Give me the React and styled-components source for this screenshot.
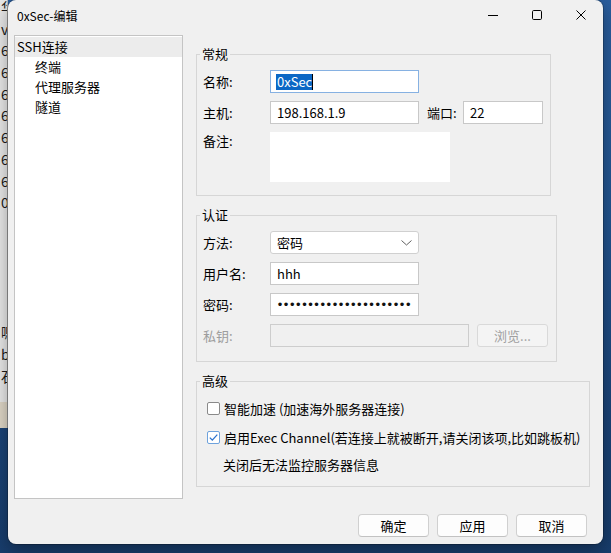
import React from "react";
import styled, { createGlobalStyle } from "styled-components";

const GlobalStyle = createGlobalStyle`
  html, body { margin: 0; padding: 0; width: 611px; height: 553px; overflow: hidden; background: #1c4478; }
  body { font-family: "Noto Sans CJK SC", "Noto Sans", sans-serif; font-size: 13px; color: #000; }
  * { box-sizing: border-box; }
`;

const Desktop = styled.div`
  display: flex;
  width: 611px;
  height: 553px;
  background: linear-gradient(180deg, #2a5e9e 0%, #22548f 40%, #1b4478 75%, #183d6c 100%);
`;

const LeftStrip = styled.div`
  width: 8px;
  flex: none;
  display: flex;
  flex-direction: column;
  overflow: hidden;
`;

const BackApp = styled.div`
  height: 405px;
  background: #e8e8e8;
  overflow: hidden;
  font-size: 14px;
  line-height: 21.7px;
  white-space: nowrap;
  margin-top: -3px;
  border-right: 1px solid #b9b9b9;
`;

const BackLine = styled.div`
  width: 7px;
  height: 21.7px;
  padding-left: 1px;
  overflow: hidden;
  color: #1a1a1a;
`;

const BackBar = styled.div`
  height: 26px;
  background: #ded6c6;
  border-right: 1px solid #b9b9b9;
`;

const WindowCol = styled.div`
  width: 595px;
  flex: none;
`;

const Window = styled.div`
  width: 595px;
  height: 544px;
  background: #f0f0f0;
  border-radius: 8px;
  overflow: hidden;
  box-shadow: 0 0 0 1px rgba(0, 0, 0, 0.22), 0 6px 18px rgba(0, 0, 0, 0.35);
  display: flex;
  flex-direction: column;
`;

const TitleBar = styled.div`
  height: 30px;
  flex: none;
  display: flex;
  align-items: center;
  justify-content: space-between;
  padding-left: 9px;
`;

const Title = styled.div`
  font-size: 12px;
  color: #000;
`;

const Controls = styled.div`
  display: flex;
  align-self: stretch;
`;

const CtrlBtn = styled.div`
  width: 44px;
  height: 30px;
  display: flex;
  align-items: center;
  justify-content: center;
`;

const Body = styled.div`
  height: 469px;
  flex: none;
  display: grid;
  grid-template-columns: 169px 1fr;
  column-gap: 13px;
  padding: 5px 0 0 6px;
`;

const Tree = styled.div`
  height: 464px;
  background: #fff;
  border: 1px solid #c4c4c4;
  padding-top: 1px;
`;

const TreeItem = styled.div`
  height: 20px;
  line-height: 20px;
  padding-left: ${(p) => (p.$child ? 20 : 2)}px;
  background: ${(p) => (p.$selected ? "#ececec" : "transparent")};
  white-space: nowrap;
`;

const Pane = styled.div`
  display: flex;
  flex-direction: column;
  align-items: flex-start;
`;

const Group = styled.fieldset`
  width: ${(p) => p.$w}px;
  margin: 10px 0 0;
  padding: 7px 6px ${(p) => p.$pb}px;
  border: 1px solid #d6d6d6;
  min-width: 0;
`;

const Legend = styled.legend`
  padding: 0 2px;
  margin-left: -3px;
  line-height: 18px;
  font-size: 13px;
`;

const Rows = styled.div`
  display: flex;
  flex-direction: column;
  gap: 8px;
`;

const Row = styled.div`
  display: flex;
  align-items: ${(p) => (p.$top ? "flex-start" : "center")};
  min-height: 23px;
`;

const Label = styled.div`
  width: ${(p) => p.$w || 67}px;
  flex: none;
  line-height: 18px;
  margin-left: ${(p) => p.$ml || 0}px;
  color: ${(p) => (p.$disabled ? "#9d9d9d" : "#000")};
  white-space: nowrap;
`;

const TextBox = styled.div`
  width: ${(p) => p.$w}px;
  height: 23px;
  flex: none;
  display: flex;
  align-items: center;
  padding: 0 6px;
  background: ${(p) => (p.$disabled ? "#f0f0f0" : "#fff")};
  border: 1px solid ${(p) => (p.$focused ? "#86b1e2" : p.$disabled ? "#cdcdcd" : "#c8c8c8")};
  overflow: hidden;
  white-space: nowrap;
`;

const Selected = styled.span`
  background: #0b67c5;
  color: #fff;
  line-height: 16px;
  margin-left: -1px;
  padding-left: 1px;
  border-right: 1px solid #000;
`;

const DotsClip = styled.div`
  flex: 1;
  min-width: 0;
  display: flex;
  justify-content: flex-end;
  overflow: hidden;
`;

const Dots = styled.span`
  flex: none;
  font-family: "Liberation Sans", Arial, sans-serif;
  font-size: 13px;
  letter-spacing: 1.55px;
  color: #111;
`;

const Select = styled.div`
  width: 149px;
  height: 23px;
  display: flex;
  align-items: center;
  justify-content: space-between;
  padding: 0 6px;
  background: #fff;
  border: 1px solid #d0d0d0;
  border-radius: 3px;
`;

const Memo = styled.div`
  width: 180px;
  height: 50px;
  background: #fff;
`;

const SmallButton = styled.div`
  width: 71px;
  height: 23px;
  margin-left: 8px;
  display: flex;
  align-items: center;
  justify-content: center;
  border: 1px solid #d9d9d9;
  border-radius: 3px;
  background: #f4f4f4;
  color: #a0a0a0;
`;

const CheckRow = styled.div`
  display: flex;
  align-items: center;
  height: 20px;
  gap: 4px;
  padding-left: ${(p) => (p.$hint ? 20 : 4)}px;
  margin-top: ${(p) => p.$mt || 0}px;
  white-space: nowrap;
`;

const Box = styled.div`
  width: 13px;
  height: 13px;
  flex: none;
  background: #fff;
  border: 1px solid ${(p) => (p.$checked ? "#6ea2dc" : "#8a8a8a")};
  border-radius: 2px;
  display: flex;
  align-items: center;
  justify-content: center;
`;

const Footer = styled.div`
  display: flex;
  justify-content: flex-end;
  gap: 8px;
  padding: 15px 16px 7px 0;
`;

const Button = styled.div`
  width: 71px;
  height: 23px;
  display: flex;
  align-items: center;
  justify-content: center;
  background: #fdfdfd;
  border: 1px solid #d0d0d0;
  border-bottom-color: #c2c2c2;
  border-radius: 4px;
`;

const backLines = ["华", "v", "6", "6", "6", "6", "6", "6", "6", "0", "", "", "", "", "", "嗯", "b", "石"];

function Check({ checked }) {
  return (
    <Box $checked={checked}>
      {checked && (
        <svg width="11" height="11" viewBox="0 0 11 11">
          <path d="M1.8 5.6 L4.3 8.1 L9.3 2.6" fill="none" stroke="#2b73cf" strokeWidth="1.3" />
        </svg>
      )}
    </Box>
  );
}

export default function App() {
  return (
    <>
      <GlobalStyle />
      <Desktop>
        <LeftStrip>
          <BackApp>
            {backLines.map((t, i) => (
              <BackLine key={i}>{t}</BackLine>
            ))}
          </BackApp>
          <BackBar />
        </LeftStrip>
        <WindowCol>
          <Window>
            <TitleBar>
              <Title>0xSec-编辑</Title>
              <Controls>
                <CtrlBtn>
                  <svg width="10" height="10" viewBox="0 0 10 10">
                    <path d="M0 5.5 H10" stroke="#000" strokeWidth="1" />
                  </svg>
                </CtrlBtn>
                <CtrlBtn>
                  <svg width="10" height="10" viewBox="0 0 10 10">
                    <rect x="0.5" y="0.5" width="9" height="9" rx="1.2" fill="none" stroke="#000" strokeWidth="1" />
                  </svg>
                </CtrlBtn>
                <CtrlBtn>
                  <svg width="10" height="10" viewBox="0 0 10 10">
                    <path d="M0.5 0.5 L9.5 9.5 M9.5 0.5 L0.5 9.5" stroke="#000" strokeWidth="1" />
                  </svg>
                </CtrlBtn>
              </Controls>
            </TitleBar>
            <Body>
              <Tree>
                <TreeItem $selected>SSH连接</TreeItem>
                <TreeItem $child>终端</TreeItem>
                <TreeItem $child>代理服务器</TreeItem>
                <TreeItem $child>隧道</TreeItem>
              </Tree>
              <Pane>
                <Group $w={355} $pb={13}>
                  <Legend>常规</Legend>
                  <Rows>
                    <Row>
                      <Label>名称:</Label>
                      <TextBox $w={149} $focused>
                        <Selected>0xSec</Selected>
                      </TextBox>
                    </Row>
                    <Row>
                      <Label>主机:</Label>
                      <TextBox $w={149}>198.168.1.9</TextBox>
                      <Label $w={36} $ml={8}>端口:</Label>
                      <TextBox $w={80}>22</TextBox>
                    </Row>
                    <Row $top>
                      <Label>备注:</Label>
                      <Memo />
                    </Row>
                  </Rows>
                </Group>
                <Group $w={361} $pb={14}>
                  <Legend>认证</Legend>
                  <Rows>
                    <Row>
                      <Label>方法:</Label>
                      <Select>
                        <span>密码</span>
                        <svg width="11" height="6" viewBox="0 0 11 6">
                          <path d="M0.5 0.5 L5.5 5 L10.5 0.5" fill="none" stroke="#606060" strokeWidth="1" />
                        </svg>
                      </Select>
                    </Row>
                    <Row>
                      <Label>用户名:</Label>
                      <TextBox $w={149}>hhh</TextBox>
                    </Row>
                    <Row>
                      <Label>密码:</Label>
                      <TextBox $w={149}>
                        <DotsClip>
                          <Dots>••••••••••••••••••••••••••</Dots>
                        </DotsClip>
                      </TextBox>
                    </Row>
                    <Row>
                      <Label $disabled>私钥:</Label>
                      <TextBox $w={199} $disabled />
                      <SmallButton>浏览...</SmallButton>
                    </Row>
                  </Rows>
                </Group>
                <Group $w={394} $pb={12}>
                  <Legend>高级</Legend>
                  <CheckRow $mt={1}>
                    <Check />
                    <span>智能加速 (加速海外服务器连接)</span>
                  </CheckRow>
                  <CheckRow $mt={9}>
                    <Check checked />
                    <span>启用Exec Channel(若连接上就被断开,请关闭该项,比如跳板机)</span>
                  </CheckRow>
                  <CheckRow $hint $mt={7}>
                    关闭后无法监控服务器信息
                  </CheckRow>
                </Group>
              </Pane>
            </Body>
            <Footer>
              <Button>确定</Button>
              <Button>应用</Button>
              <Button>取消</Button>
            </Footer>
          </Window>
        </WindowCol>
      </Desktop>
    </>
  );
}
